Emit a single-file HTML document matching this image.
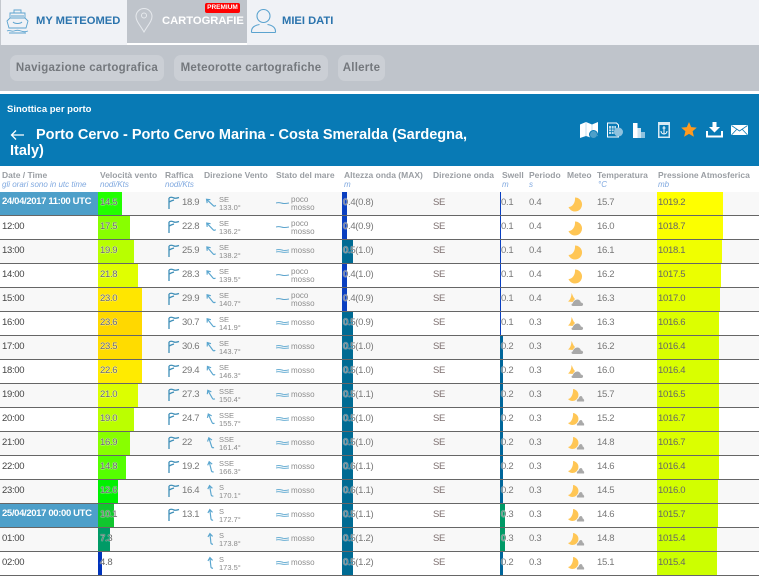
<!DOCTYPE html>
<html><head><meta charset="utf-8">
<style>
html,body{margin:0;padding:0;background:#fff}
body{width:759px;height:576px;overflow:hidden;position:relative;font-family:"Liberation Sans",sans-serif}
.abs,.r,.r>*{position:absolute}
.nav{left:0;top:0;width:759px;height:45px;background:#f0f2f6;border-left:1px solid #c4c8ce;box-sizing:border-box}
.tab{left:127px;top:0;width:120px;height:43px;background:#bfc4cb;border-bottom:2px solid #fff}
.nt{font:bold 11.2px/14px "Liberation Sans",sans-serif;color:#2b74ad;white-space:nowrap;top:14px}
.bar{left:0;top:45px;width:759px;height:46px;background:#bfc4cb}
.btn{top:55px;height:26px;background:#cbcfd5;border-radius:7px;font:bold 11.5px/26px "Liberation Sans",sans-serif;letter-spacing:.25px;color:#74787d;text-align:center}
.blue{left:0;top:94px;width:759px;height:72px;background:#087ab5}
.hd{top:170px;font:bold 8.5px/11px "Liberation Sans",sans-serif;color:#9a9ea3;white-space:nowrap}
.sb{top:180px;font:italic 8px/9px "Liberation Sans",sans-serif;color:#7fa8df;white-space:nowrap}
.r{left:0;width:759px;height:23px;border-bottom:1px solid #666;background:#fff;font-size:9.5px;letter-spacing:-.3px;color:#777}
.o{background:#f8f8f8}
.r>span{top:4px;line-height:13px;white-space:nowrap}
.d{left:2px;color:#444;font-size:9.5px}
.dt{left:0;width:96px;height:23px;top:0!important;padding-left:2px;background:#4d9fc9;color:#fff;font-weight:bold;line-height:19px!important;font-size:9.5px;letter-spacing:-.35px}
.r>i{top:0;height:23px;display:block}
.wb{left:98px}.ab{left:342px}.sbb{left:500px}.pb{left:657px}
.wv{left:100px;color:#666;text-shadow:0 0 1px #fff,0 0 1px #fff}.gv{left:182px}
.dl{left:219px;font-size:7.5px;line-height:8px!important;letter-spacing:0;top:4px!important;color:#8a8a8a}
.sea{left:291px;font-size:8px;line-height:8px!important;letter-spacing:0;color:#8d8d8d;top:4px!important}
.sea.m{top:7px!important}
.wa{left:343px;color:#777;text-shadow:0 0 1px #fff,0 0 1px #fff}.wd{left:433px;color:#7d6f6f}.sw{left:501px;color:#777;text-shadow:0 0 1px #fff,0 0 1px #fff}.pe{left:529px;color:#777}
.te{left:597px;color:#777}.pr{left:658px;color:#666}
.r>svg{position:absolute}
.g{left:167px;top:4px}.a{left:205px;top:4px;width:11px;height:14px}.s{left:276px;top:8px}.me{left:567px;top:4px}
</style></head>
<body>
<svg width="0" height="0" style="position:absolute">
<symbol id="gust" viewBox="0 0 14 14"><path d="M2 13V2M2 2c2-1.500 4-.5 5 0 1 .5 2 .5 5-.5M2 6c2-1 3-1.500 5-2" fill="none" stroke="#3f8fb8" stroke-width="1.300"/></symbol>
<symbol id="arr" viewBox="0 0 14 18"><path d="M7 2v12c0 1.500 1 2 2.500 2M4 6L7 2l3 4" fill="none" stroke="#5aa6cf" stroke-width="1.500"/></symbol>
<symbol id="w1" viewBox="0 0 13 6"><path d="M0 3c3-1 5 0 7 .4 2 .4 4 0 6-.4" fill="none" stroke="#5ba3cc" stroke-width="1"/></symbol>
<symbol id="w2" viewBox="0 0 13 6"><path d="M0 2c3-1.300 5-.2 7 .3s4 0 6-.4M0 4c3-1 5 0 7 .3s4 0 6-.3" fill="none" stroke="#6db0d4" stroke-width="1"/></symbol>
<symbol id="moon" viewBox="0 0 16 16"><path d="M8 1.500A7 7 0 1 1 1.500 11C5.500 11 8.500 6.500 8 1.500z" fill="#ffc655"/></symbol>
<symbol id="mc" viewBox="0 0 18 16"><path d="M6 14c-1.800 0-2-2.300-.2-2.600.3-2 2.500-4 4.700-3.900 2 .1 3 1.500 3.500 3.200 2.300-.3 3 3.300.5 3.300z" fill="#a9a9a9"/><path d="M4.500 1C6 3.500 6 5 8 7L5.500 10 1 9.500C3 8 4.500 5 4.500 1z" fill="#ffc655"/></symbol>
<symbol id="md" viewBox="0 0 18 16"><path d="M10 13.500c-.5-1.500.5-2.500 1.500-2.800.3-1.500 1.500-2.700 2.500-2.700s1.500 1.200 1.700 2.500c1.300.3 1.800 2 1.300 3z" fill="#a9a9a9"/><path d="M6 1A6 6 0 1 1 1 11C4 11 6.500 6 6 1z" fill="#ffc655"/></symbol>
</svg>

<div class="abs nav"></div>
<div class="abs tab"></div>
<svg class="abs" style="left:6px;top:8px" width="23" height="26" viewBox="0 0 23 26" fill="none" stroke="#5ba3cf" stroke-width=".9"><path d="M4 10V5h15v5M8 5V2h7v3M5 8h13M1 13l3-3h15l3 3-2 7H3zM7 14c2 2 7 2 9 0M1 23c3-1.500 4 1 7 0s4-1 7 0 4 1 7 0M3 25h17"/></svg>
<div class="abs nt" style="left:36px">MY METEOMED</div>
<svg class="abs" style="left:135px;top:8px" width="18" height="25" viewBox="0 0 18 25" fill="none" stroke="#e6e9ed" stroke-width="1"><path d="M9 24C5 17 1 13 1 8.500a8 8 0 0 1 16 0C17 13 13 17 9 24z"/><circle cx="9" cy="7.500" r="2.500"/></svg>
<div class="abs nt" style="left:162px;color:#fff">CARTOGRAFIE</div>
<div class="abs" style="left:205px;top:3px;width:35px;height:10px;background:#f00;border-radius:2px;color:#fff;font:bold 6.500px/10px 'Liberation Sans',sans-serif;text-align:center">PREMIUM</div>
<svg class="abs" style="left:250px;top:8px" width="27" height="26" viewBox="0 0 27 26" fill="none" stroke="#5ba3cf" stroke-width="1.100"><circle cx="13.500" cy="8" r="6.500"/><path d="M1.500 24.500v-1c0-5 5-6.500 8-7M25.500 24.500v-1c0-5-5-6.500-8-7M1.500 24.500h24"/></svg>
<div class="abs nt" style="left:282px">MIEI DATI</div>

<div class="abs bar"></div>
<div class="abs btn" style="left:10px;width:154px">Navigazione cartografica</div>
<div class="abs btn" style="left:174px;width:154px">Meteorotte cartografiche</div>
<div class="abs btn" style="left:338px;width:47px">Allerte</div>

<div class="abs blue"></div>
<div class="abs" style="left:7px;top:104px;color:#fff;font:bold 9.500px/12px 'Liberation Sans',sans-serif">Sinottica per porto</div>
<svg class="abs" style="left:10px;top:129px" width="14" height="12" viewBox="0 0 14 12" fill="none" stroke="#fff" stroke-width="1.300"><path d="M14 6H1.500M6 1.500L1.500 6 6 10.500"/></svg>
<div class="abs" style="left:36px;top:127px;color:#fff;font:bold 14.500px/17px 'Liberation Sans',sans-serif;white-space:nowrap">Porto Cervo - Porto Cervo Marina - Costa Smeralda (Sardegna,</div>
<div class="abs" style="left:10px;top:143px;color:#fff;font:bold 14.500px/17px 'Liberation Sans',sans-serif">Italy)</div>

<svg class="abs" style="left:580px;top:122px" width="19" height="17" viewBox="0 0 19 17"><path d="M0 2.500L6 0l6 2.500L18 0v14l-6 2-6-2-6 2z" fill="#fff"/><path d="M6 0v14M12 2.500V16" stroke="#b8d8ea" stroke-width=".8"/><circle cx="13.500" cy="12.500" r="4" fill="#4d9fc9" stroke="#087ab5"/></svg>
<svg class="abs" style="left:606px;top:121px" width="18" height="18" viewBox="0 0 18 18"><path d="M1.500 2h9l2 2v12h-11z" fill="none" stroke="#fff" stroke-width="1"/><path d="M3 5h7v8H3z" fill="#bcdcec"/><path d="M5.500 5v8M8 5v8M3 8h7M3 10.500h7" stroke="#087ab5" stroke-width=".7"/><circle cx="12.500" cy="11" r="4.500" fill="#8fc2de"/></svg>
<svg class="abs" style="left:632px;top:122px" width="15" height="16" viewBox="0 0 15 16"><path d="M1 1h4.500v15H1z" fill="#fff"/><path d="M5.500 6H9v10H5.500z" fill="#cde4f0"/><path d="M9 10h4v6H9z" fill="#8fc2de"/></svg>
<svg class="abs" style="left:658px;top:122px" width="12" height="16" viewBox="0 0 12 16"><path d="M0 0h12v16H0z" fill="#d8eaf4"/><path d="M1.500 3h9v11.500h-9z" fill="#087ab5"/><path d="M6 4v8M4.500 6h3M3 9c0 2 1.500 3 3 3s3-1 3-3" fill="none" stroke="#fff" stroke-width="1"/></svg>
<svg class="abs" style="left:681px;top:122px" width="16" height="15" viewBox="0 0 16 15"><path d="M8 0l2.200 5.100 5.600.5-4.200 3.700 1.300 5.500L8 11.900 3.100 14.800l1.300-5.500L.2 5.600l5.600-.5z" fill="#ff9a1f"/></svg>
<svg class="abs" style="left:706px;top:122px" width="17" height="16" viewBox="0 0 17 16"><path d="M6.500 0h4v5H14l-5.500 5.500L3 5h3.500z" fill="#fff"/><path d="M1 9v5.500h15V9" fill="none" stroke="#fff" stroke-width="2"/></svg>
<svg class="abs" style="left:731px;top:124px" width="17" height="12" viewBox="0 0 17 12"><path d="M0 1h17v10H0z" fill="#fff"/><path d="M.5 1.500l8 5.500 8-5.500M.5 11l5.500-6M16.500 11L11 5" fill="none" stroke="#087ab5" stroke-width=".8"/></svg>

<div class="abs hd" style="left:2px">Date / Time</div><div class="abs sb" style="left:2px">gli orari sono in utc time</div>
<div class="abs hd" style="left:100px">Velocità vento</div><div class="abs sb" style="left:100px">nodi/Kts</div>
<div class="abs hd" style="left:165px">Raffica</div><div class="abs sb" style="left:165px">nodi/Kts</div>
<div class="abs hd" style="left:204px">Direzione Vento</div>
<div class="abs hd" style="left:276px">Stato del mare</div>
<div class="abs hd" style="left:344px">Altezza onda (MAX)</div><div class="abs sb" style="left:344px">m</div>
<div class="abs hd" style="left:433px">Direzione onda</div>
<div class="abs hd" style="left:502px">Swell</div><div class="abs sb" style="left:502px">m</div>
<div class="abs hd" style="left:529px">Periodo</div><div class="abs sb" style="left:529px">s</div>
<div class="abs hd" style="left:567px">Meteo</div>
<div class="abs hd" style="left:597px">Temperatura</div><div class="abs sb" style="left:598px">°C</div>
<div class="abs hd" style="left:658px">Pressione Atmosferica</div><div class="abs sb" style="left:658px">mb</div>

<div class="r o" style="top:192px"><span class="dt">24/04/2017 11:00 UTC</span><i class="wb" style="width:24px;background:#22ff00"></i><span class="wv">14.5</span><svg class="g" width="14" height="14"><use href="#gust"/></svg><span class="gv">18.9</span><svg class="a" style="transform:rotate(-47deg)"><use href="#arr"/></svg><span class="dl">SE<br>133.0°</span><svg class="s" width="13" height="6"><use href="#w1"/></svg><span class="sea">poco<br>mosso</span><i class="ab" style="width:5px;background:#0a3fc0"></i><span class="wa">0.4(0.8)</span><span class="wd">SE</span><i class="sbb" style="width:1px;background:#0a3fc0"></i><span class="sw">0.1</span><span class="pe">0.4</span><svg class="me" width="16" height="16"><use href="#moon"/></svg><span class="te">15.7</span><i class="pb" style="width:66px;background:#ffff00"></i><span class="pr">1019.2</span></div>
<div class="r" style="top:216px"><span class="d">12:00</span><i class="wb" style="width:32px;background:#88ff00"></i><span class="wv">17.5</span><svg class="g" width="14" height="14"><use href="#gust"/></svg><span class="gv">22.8</span><svg class="a" style="transform:rotate(-44deg)"><use href="#arr"/></svg><span class="dl">SE<br>136.2°</span><svg class="s" width="13" height="6"><use href="#w1"/></svg><span class="sea">poco<br>mosso</span><i class="ab" style="width:5px;background:#0a3fc0"></i><span class="wa">0.4(0.9)</span><span class="wd">SE</span><i class="sbb" style="width:1px;background:#0a3fc0"></i><span class="sw">0.1</span><span class="pe">0.4</span><svg class="me" width="16" height="16"><use href="#moon"/></svg><span class="te">16.0</span><i class="pb" style="width:66px;background:#fbff00"></i><span class="pr">1018.7</span></div>
<div class="r o" style="top:240px"><span class="d">13:00</span><i class="wb" style="width:36px;background:#b8ff00"></i><span class="wv">19.9</span><svg class="g" width="14" height="14"><use href="#gust"/></svg><span class="gv">25.9</span><svg class="a" style="transform:rotate(-42deg)"><use href="#arr"/></svg><span class="dl">SE<br>138.2°</span><svg class="s" width="13" height="6"><use href="#w2"/></svg><span class="sea m">mosso</span><i class="ab" style="width:11px;background:#006b93"></i><span class="wa">0.5(1.0)</span><span class="wd">SE</span><i class="sbb" style="width:1px;background:#0a3fc0"></i><span class="sw">0.1</span><span class="pe">0.4</span><svg class="me" width="16" height="16"><use href="#moon"/></svg><span class="te">16.1</span><i class="pb" style="width:65px;background:#f0ff00"></i><span class="pr">1018.1</span></div>
<div class="r" style="top:264px"><span class="d">14:00</span><i class="wb" style="width:40px;background:#e0ff00"></i><span class="wv">21.8</span><svg class="g" width="14" height="14"><use href="#gust"/></svg><span class="gv">28.3</span><svg class="a" style="transform:rotate(-40deg)"><use href="#arr"/></svg><span class="dl">SE<br>139.5°</span><svg class="s" width="13" height="6"><use href="#w1"/></svg><span class="sea">poco<br>mosso</span><i class="ab" style="width:5px;background:#0a3fc0"></i><span class="wa">0.4(1.0)</span><span class="wd">SE</span><i class="sbb" style="width:1px;background:#0a3fc0"></i><span class="sw">0.1</span><span class="pe">0.4</span><svg class="me" width="16" height="16"><use href="#moon"/></svg><span class="te">16.2</span><i class="pb" style="width:64px;background:#ebff00"></i><span class="pr">1017.5</span></div>
<div class="r o" style="top:288px"><span class="d">15:00</span><i class="wb" style="width:44px;background:#ffe600"></i><span class="wv">23.0</span><svg class="g" width="14" height="14"><use href="#gust"/></svg><span class="gv">29.9</span><svg class="a" style="transform:rotate(-39deg)"><use href="#arr"/></svg><span class="dl">SE<br>140.7°</span><svg class="s" width="13" height="6"><use href="#w1"/></svg><span class="sea">poco<br>mosso</span><i class="ab" style="width:5px;background:#0a3fc0"></i><span class="wa">0.4(0.9)</span><span class="wd">SE</span><i class="sbb" style="width:1px;background:#0a3fc0"></i><span class="sw">0.1</span><span class="pe">0.4</span><svg class="me" width="18" height="16"><use href="#mc"/></svg><span class="te">16.3</span><i class="pb" style="width:63px;background:#e3ff00"></i><span class="pr">1017.0</span></div>
<div class="r" style="top:312px"><span class="d">16:00</span><i class="wb" style="width:44px;background:#ffd800"></i><span class="wv">23.6</span><svg class="g" width="14" height="14"><use href="#gust"/></svg><span class="gv">30.7</span><svg class="a" style="transform:rotate(-38deg)"><use href="#arr"/></svg><span class="dl">SE<br>141.9°</span><svg class="s" width="13" height="6"><use href="#w2"/></svg><span class="sea m">mosso</span><i class="ab" style="width:11px;background:#006b93"></i><span class="wa">0.5(0.9)</span><span class="wd">SE</span><i class="sbb" style="width:1px;background:#0a3fc0"></i><span class="sw">0.1</span><span class="pe">0.3</span><svg class="me" width="18" height="16"><use href="#mc"/></svg><span class="te">16.3</span><i class="pb" style="width:62px;background:#dcff00"></i><span class="pr">1016.6</span></div>
<div class="r o" style="top:336px"><span class="d">17:00</span><i class="wb" style="width:44px;background:#ffdc00"></i><span class="wv">23.5</span><svg class="g" width="14" height="14"><use href="#gust"/></svg><span class="gv">30.6</span><svg class="a" style="transform:rotate(-36deg)"><use href="#arr"/></svg><span class="dl">SE<br>143.7°</span><svg class="s" width="13" height="6"><use href="#w2"/></svg><span class="sea m">mosso</span><i class="ab" style="width:11px;background:#006b93"></i><span class="wa">0.5(1.0)</span><span class="wd">SE</span><i class="sbb" style="width:3px;background:#00669a"></i><span class="sw">0.2</span><span class="pe">0.3</span><svg class="me" width="18" height="16"><use href="#mc"/></svg><span class="te">16.2</span><i class="pb" style="width:62px;background:#d9ff00"></i><span class="pr">1016.4</span></div>
<div class="r" style="top:360px"><span class="d">18:00</span><i class="wb" style="width:44px;background:#ffeb00"></i><span class="wv">22.6</span><svg class="g" width="14" height="14"><use href="#gust"/></svg><span class="gv">29.4</span><svg class="a" style="transform:rotate(-34deg)"><use href="#arr"/></svg><span class="dl">SE<br>146.3°</span><svg class="s" width="13" height="6"><use href="#w2"/></svg><span class="sea m">mosso</span><i class="ab" style="width:11px;background:#006b93"></i><span class="wa">0.5(1.0)</span><span class="wd">SE</span><i class="sbb" style="width:3px;background:#00669a"></i><span class="sw">0.2</span><span class="pe">0.3</span><svg class="me" width="18" height="16"><use href="#mc"/></svg><span class="te">16.0</span><i class="pb" style="width:62px;background:#d9ff00"></i><span class="pr">1016.4</span></div>
<div class="r o" style="top:384px"><span class="d">19:00</span><i class="wb" style="width:40px;background:#dcff00"></i><span class="wv">21.0</span><svg class="g" width="14" height="14"><use href="#gust"/></svg><span class="gv">27.3</span><svg class="a" style="transform:rotate(-30deg)"><use href="#arr"/></svg><span class="dl">SSE<br>150.4°</span><svg class="s" width="13" height="6"><use href="#w2"/></svg><span class="sea m">mosso</span><i class="ab" style="width:11px;background:#006b93"></i><span class="wa">0.5(1.1)</span><span class="wd">SE</span><i class="sbb" style="width:3px;background:#00669a"></i><span class="sw">0.2</span><span class="pe">0.3</span><svg class="me" width="18" height="16"><use href="#md"/></svg><span class="te">15.7</span><i class="pb" style="width:62px;background:#daff00"></i><span class="pr">1016.5</span></div>
<div class="r" style="top:408px"><span class="d">20:00</span><i class="wb" style="width:36px;background:#bbff00"></i><span class="wv">19.0</span><svg class="g" width="14" height="14"><use href="#gust"/></svg><span class="gv">24.7</span><svg class="a" style="transform:rotate(-24deg)"><use href="#arr"/></svg><span class="dl">SSE<br>155.7°</span><svg class="s" width="13" height="6"><use href="#w2"/></svg><span class="sea m">mosso</span><i class="ab" style="width:11px;background:#006b93"></i><span class="wa">0.5(1.0)</span><span class="wd">SE</span><i class="sbb" style="width:3px;background:#00669a"></i><span class="sw">0.2</span><span class="pe">0.3</span><svg class="me" width="18" height="16"><use href="#md"/></svg><span class="te">15.2</span><i class="pb" style="width:62px;background:#dbff00"></i><span class="pr">1016.7</span></div>
<div class="r o" style="top:432px"><span class="d">21:00</span><i class="wb" style="width:32px;background:#88ff00"></i><span class="wv">16.9</span><svg class="g" width="14" height="14"><use href="#gust"/></svg><span class="gv">22</span><svg class="a" style="transform:rotate(-18deg)"><use href="#arr"/></svg><span class="dl">SSE<br>161.4°</span><svg class="s" width="13" height="6"><use href="#w2"/></svg><span class="sea m">mosso</span><i class="ab" style="width:11px;background:#006b93"></i><span class="wa">0.5(1.0)</span><span class="wd">SE</span><i class="sbb" style="width:3px;background:#00669a"></i><span class="sw">0.2</span><span class="pe">0.3</span><svg class="me" width="18" height="16"><use href="#md"/></svg><span class="te">14.8</span><i class="pb" style="width:62px;background:#dbff00"></i><span class="pr">1016.7</span></div>
<div class="r" style="top:456px"><span class="d">22:00</span><i class="wb" style="width:28px;background:#55ff00"></i><span class="wv">14.8</span><svg class="g" width="14" height="14"><use href="#gust"/></svg><span class="gv">19.2</span><svg class="a" style="transform:rotate(-14deg)"><use href="#arr"/></svg><span class="dl">SSE<br>166.3°</span><svg class="s" width="13" height="6"><use href="#w2"/></svg><span class="sea m">mosso</span><i class="ab" style="width:11px;background:#006b93"></i><span class="wa">0.6(1.1)</span><span class="wd">SE</span><i class="sbb" style="width:3px;background:#00669a"></i><span class="sw">0.2</span><span class="pe">0.3</span><svg class="me" width="18" height="16"><use href="#md"/></svg><span class="te">14.6</span><i class="pb" style="width:62px;background:#d9ff00"></i><span class="pr">1016.4</span></div>
<div class="r o" style="top:480px"><span class="d">23:00</span><i class="wb" style="width:20px;background:#00f000"></i><span class="wv">12.6</span><svg class="g" width="14" height="14"><use href="#gust"/></svg><span class="gv">16.4</span><svg class="a" style="transform:rotate(-10deg)"><use href="#arr"/></svg><span class="dl">S<br>170.1°</span><svg class="s" width="13" height="6"><use href="#w2"/></svg><span class="sea m">mosso</span><i class="ab" style="width:11px;background:#006b93"></i><span class="wa">0.6(1.1)</span><span class="wd">SE</span><i class="sbb" style="width:3px;background:#00669a"></i><span class="sw">0.2</span><span class="pe">0.3</span><svg class="me" width="18" height="16"><use href="#md"/></svg><span class="te">14.5</span><i class="pb" style="width:61px;background:#d2ff00"></i><span class="pr">1016.0</span></div>
<div class="r" style="top:504px"><span class="dt">25/04/2017 00:00 UTC</span><i class="wb" style="width:16px;background:#11c62e"></i><span class="wv">10.1</span><svg class="g" width="14" height="14"><use href="#gust"/></svg><span class="gv">13.1</span><svg class="a" style="transform:rotate(-7deg)"><use href="#arr"/></svg><span class="dl">S<br>172.7°</span><svg class="s" width="13" height="6"><use href="#w2"/></svg><span class="sea m">mosso</span><i class="ab" style="width:11px;background:#006b93"></i><span class="wa">0.5(1.1)</span><span class="wd">SE</span><i class="sbb" style="width:5px;background:#009966"></i><span class="sw">0.3</span><span class="pe">0.3</span><svg class="me" width="18" height="16"><use href="#md"/></svg><span class="te">14.6</span><i class="pb" style="width:61px;background:#ceff00"></i><span class="pr">1015.7</span></div>
<div class="r o" style="top:528px"><span class="d">01:00</span><i class="wb" style="width:12px;background:#009a66"></i><span class="wv">7.3</span><svg class="a" style="transform:rotate(-6deg)"><use href="#arr"/></svg><span class="dl">S<br>173.8°</span><svg class="s" width="13" height="6"><use href="#w2"/></svg><span class="sea m">mosso</span><i class="ab" style="width:11px;background:#006b93"></i><span class="wa">0.5(1.2)</span><span class="wd">SE</span><i class="sbb" style="width:5px;background:#009966"></i><span class="sw">0.3</span><span class="pe">0.3</span><svg class="me" width="18" height="16"><use href="#md"/></svg><span class="te">14.8</span><i class="pb" style="width:60px;background:#ccff00"></i><span class="pr">1015.4</span></div>
<div class="r" style="top:552px"><span class="d">02:00</span><i class="wb" style="width:4px;background:#0033bb"></i><span class="wv">4.8</span><svg class="a" style="transform:rotate(-6deg)"><use href="#arr"/></svg><span class="dl">S<br>173.5°</span><svg class="s" width="13" height="6"><use href="#w2"/></svg><span class="sea m">mosso</span><i class="ab" style="width:11px;background:#006b93"></i><span class="wa">0.5(1.2)</span><span class="wd">SE</span><i class="sbb" style="width:3px;background:#00669a"></i><span class="sw">0.2</span><span class="pe">0.3</span><svg class="me" width="18" height="16"><use href="#md"/></svg><span class="te">15.1</span><i class="pb" style="width:60px;background:#ccff00"></i><span class="pr">1015.4</span></div>
</body></html>
